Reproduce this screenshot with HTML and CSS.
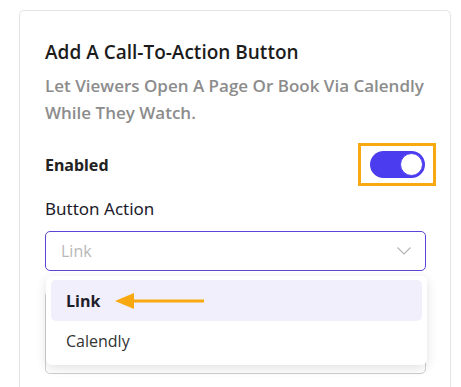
FILE: index.html
```html
<!DOCTYPE html>
<html lang="en">
<head>
  <meta charset="UTF-8">
  <meta name="viewport" content="width=device-width, initial-scale=1.0">
  <title>Call-To-Action Button</title>
  <link rel="stylesheet" href="styles.css">
</head>
<body>
  <div class="card">
    <h2 class="title">Add A Call-To-Action Button</h2>
    <p class="subtitle">Let Viewers Open A Page Or Book Via Calendly While They Watch.</p>

    <div class="row">
      <span class="row-label">Enabled</span>
      <div class="highlight">
        <div class="toggle"><span class="knob"></span></div>
      </div>
    </div>

    <label class="field-label">Button Action</label>
    <div class="select-wrap">
      <div class="select">
        <span class="placeholder">Link</span>
        <svg class="chevron" width="14" height="8" viewBox="0 0 14 8"><path d="M0.5 0.5 L7 7 L13.5 0.5" fill="none" stroke="#b4b4b4" stroke-width="1.2"/></svg>
      </div>
      <div class="behind"></div>

      <ul class="menu">
        <li class="option active">
          <span>Link</span>
          <svg class="pointer" width="90" height="18" viewBox="0 0 90 18"><path d="M0 9 L19 1 L19 17 Z" fill="#f7a90f"/><rect x="17" y="7.5" width="72" height="3" fill="#f7a90f"/></svg>
        </li>
        <li class="option">Calendly</li>
      </ul>
    </div>
  </div>
</body>
</html>
```

FILE: styles.css
```css
body {
  margin: 0;
  background: #fff;
  font-family: "Open Sans", "Noto Sans", sans-serif;
}
.card {
  margin: 10px 0 0 19px;
  width: 432px;
  height: 400px;
  box-sizing: border-box;
  border: 1px solid #e4e4e4;
  border-radius: 5px;
  padding: 29px 24px 0 25px;
}
.title {
  margin: 0;
  font-size: 19px;
  line-height: 24px;
  font-weight: 600;
  color: #1c1c1c;
}
.subtitle {
  margin: 8px 0 0;
  font-size: 17px;
  line-height: 27px;
  font-weight: 600;
  color: #8c8c8c;
}
.row {
  margin-top: 17px;
  height: 43px;
  display: flex;
  align-items: center;
  justify-content: space-between;
}
.row-label {
  font-size: 16px;
  font-weight: 700;
  color: #222;
  font-family: "Noto Sans", sans-serif;
}
.highlight {
  margin-right: -10px;
  width: 78px;
  height: 43px;
  box-sizing: border-box;
  border: 3px solid #f7a90f;
  display: flex;
  align-items: center;
  justify-content: center;
}
.toggle {
  width: 55px;
  height: 27px;
  border-radius: 14px;
  background: #4b3cf0;
  display: flex;
  align-items: center;
  justify-content: flex-end;
  padding: 0 2px;
  box-sizing: border-box;
}
.knob {
  width: 23px;
  height: 23px;
  border-radius: 50%;
  background: #fff;
  border: 1px solid #4b3cf0;
  box-sizing: border-box;
}
.field-label {
  display: block;
  margin-top: 12px;
  font-size: 17px;
  line-height: 22px;
  color: #1b1b2b;
  font-family: "Noto Sans", sans-serif;
}
.select-wrap {
  position: relative;
  margin-top: 11px;
}
.select {
  height: 40px;
  box-sizing: border-box;
  border: 1px solid #5b45d6;
  border-radius: 5px;
  display: flex;
  align-items: center;
  justify-content: space-between;
  padding: 0 14px 0 15px;
}
.placeholder {
  font-size: 16px;
  color: #b8b8b8;
}
.chevron {
  display: block;
}
.behind {
  margin-top: 20px;
  height: 81px;
  border: 1px solid #cfcfcf;
  border-radius: 5px;
}
.menu {
  position: absolute;
  top: 45px;
  left: 1px;
  width: 381px;
  margin: 0;
  padding: 4px 5px;
  box-sizing: border-box;
  list-style: none;
  background: #fff;
  border-radius: 6px;
  box-shadow: 0 3px 12px rgba(0, 0, 0, 0.12);
}
.option {
  height: 40px;
  display: flex;
  align-items: center;
  gap: 15px;
  padding-left: 15px;
  font-size: 16px;
  color: #333;
  border-radius: 5px;
}
.option.active {
  height: 41px;
  background: #f1effc;
  font-weight: 700;
  color: #1e1e2a;
}
.pointer {
  display: block;
}
```
